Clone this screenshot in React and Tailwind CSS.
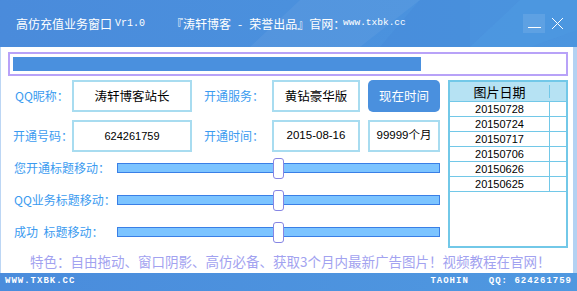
import React from 'react';

const cjk = "font-['Noto_Sans_CJK_SC',sans-serif]";
const num = "font-['Liberation_Sans','Noto_Sans_CJK_SC',sans-serif]";
const mono = "font-['Liberation_Mono','DejaVu_Sans_Mono',monospace]";

function Field({ w, children, className = '' }) {
  return (
    <div className={`h-[32px] border-2 border-[#a8dcf0] bg-white flex items-center justify-center text-black whitespace-nowrap ${w} ${className}`}>
      {children}
    </div>
  );
}

function Slider({ label }) {
  return (
    <div className="h-[32px] flex items-center">
      <div className={`w-[109px] pl-[6px] text-[12px] text-[#3b9bf0] whitespace-pre ${cjk}`}>{label}</div>
      <div className="relative w-[323px] h-[10px] border border-[#3a7fe6] bg-[#7cc4ff]">
        <div className="absolute left-[155px] top-[-6px] w-[11px] h-[21px] rounded-[3px] border border-[#8686e4] bg-white" />
      </div>
    </div>
  );
}

export default function App() {
  const dates = ['20150728', '20150724', '20150717', '20150706', '20150626', '20150625'];

  return (
    <div className="w-[577px] h-[291px] flex flex-col overflow-hidden bg-white">
      {/* title bar */}
      <div className="relative h-[47px] shrink-0 bg-gradient-to-r from-[#4a8bdb] to-[#4b95df] flex items-center pl-[16px] text-white overflow-hidden whitespace-pre">
        <svg className="absolute inset-0" width="577" height="47">
          <polygon points="300,0 420,0 360,47 250,47" fill="#ffffff" opacity="0.05" />
          <polygon points="420,0 520,0 470,47 380,47" fill="#3a70d0" opacity="0.12" />
          <polygon points="470,0 577,0 577,30 530,47 470,47" fill="#5aa6e8" opacity="0.15" />
        </svg>
        <span className={`relative text-[12px] ${cjk}`}>高仿充值业务窗口</span>
        <span className={`relative ml-[3px] text-[10px] ${mono}`}>Vr1.0</span>
        <div className={`relative ml-[26px] w-[172px] flex text-[12px] ${cjk}`}>
          <span>『涛轩博客</span>
          <span className="mx-[7px]">-</span>
          <span>荣誉出品』官网：</span>
        </div>
        <span className={`relative text-[9.5px] ${mono}`}>www.txbk.cc</span>
        <div className="relative ml-auto mr-[13px] flex items-center gap-[6px]">
          <div className="w-[22px] h-[19px] bg-white/10 flex items-end justify-center pb-[5px]">
            <div className="w-[13px] h-px bg-white" />
          </div>
          <svg width="13" height="13" viewBox="0 0 13 13">
            <path d="M1 1 L12 12 M12 1 L1 12" stroke="#fff" strokeWidth="1" />
          </svg>
        </div>
      </div>

      {/* body */}
      <div className="flex-1 border-l border-[#bcd6f4] border-r-4 border-r-[#b4d2f2] pl-[7px] pt-[5px]">
        <div className="w-[560px] h-[24px] border-2 border-[#b8a2f8] p-[3px]">
          <div className="w-[408px] h-full bg-[#4a90de]" />
        </div>

        <div className="mt-[4px] flex gap-[8px]">
          <div className="w-[432px]">
            <div className="flex items-center h-[32px] whitespace-nowrap">
              <div className={`w-[64px] pl-[7px] text-[12px] text-[#3b9bf0] ${cjk}`}>QQ昵称：</div>
              <Field w="w-[120px]"><span className={`text-[12.5px] ${cjk}`}>涛轩博客站长</span></Field>
              <div className={`w-[80px] pl-[12px] text-[12px] text-[#3b9bf0] ${cjk}`}>开通服务：</div>
              <Field w="w-[88px]"><span className={`text-[12.5px] ${cjk}`}>黄钻豪华版</span></Field>
              <div className={`ml-[8px] w-[72px] h-[32px] rounded-[5px] bg-[#4a90de] text-white flex items-center justify-center text-[12.5px] ${cjk}`}>现在时间</div>
            </div>
            <div className="flex items-center h-[32px] mt-[8px] whitespace-nowrap">
              <div className={`w-[64px] pl-[5px] text-[12px] text-[#3b9bf0] ${cjk}`}>开通号码：</div>
              <Field w="w-[120px]"><span className={`text-[11px] ${num}`}>624261759</span></Field>
              <div className={`w-[80px] pl-[12px] text-[12px] text-[#3b9bf0] ${cjk}`}>开通时间：</div>
              <Field w="w-[88px]"><span className={`text-[11.5px] ${num}`}>2015-08-16</span></Field>
              <Field w="w-[72px]" className="ml-[8px]"><span className={`text-[11.5px] ${num}`}>99999个月</span></Field>
            </div>
            <div>
              <Slider label="您开通标题移动：" />
              <Slider label="QQ业务标题移动：" />
              <Slider label="成功  标题移动：" />
            </div>
          </div>

          <div className="w-[120px] h-[168px] border-2 border-[#72c8e8]">
            <div className="h-[20px] bg-[#b6e2f3] flex border-b border-[#72c8e8]">
              <div className={`w-[99px] text-center text-[13px] text-black leading-[20px] ${cjk}`}>图片日期</div>
              <div className="w-px my-[3px] bg-[#72c8e8]" />
            </div>
            {dates.map((d) => (
              <div key={d} className="h-[15px] flex border-b border-[#72c8e8]">
                <div className={`w-[99px] text-center text-[11px] leading-[14px] text-black ${num}`}>{d}</div>
                <div className="w-px bg-[#72c8e8]" />
              </div>
            ))}
          </div>
        </div>

        <div className={`mt-[3px] pl-[22px] text-[13.5px] text-[#a2a2f0] whitespace-nowrap ${cjk}`}>
          特色：自由拖动、窗口阴影、高仿必备、获取3个月内最新广告图片！视频教程在官网！
        </div>
      </div>

      {/* status bar */}
      <div className={`h-[18px] shrink-0 bg-gradient-to-r from-[#4a8cdc] to-[#4f98e0] flex items-center px-[5px] text-white text-[9px] font-bold tracking-[1px] whitespace-pre ${mono}`}>
        <span>WWW.TXBK.CC</span>
        <span className="ml-auto">TAOHIN</span>
        <span className="ml-[20px]">QQ: 624261759</span>
      </div>
    </div>
  );
}
